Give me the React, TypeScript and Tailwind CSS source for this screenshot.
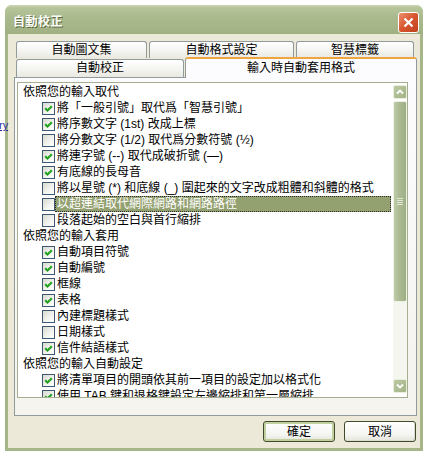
import React from "react";

type Item =
  | { kind: "h"; text: string }
  | { kind: "c"; text: string; checked: boolean; selected?: boolean };

const items: Item[] = [
  { kind: "h", text: "依照您的輸入取代" },
  { kind: "c", text: "將「一般引號」取代爲「智慧引號」", checked: true },
  { kind: "c", text: "將序數文字 (1st) 改成上標", checked: true },
  { kind: "c", text: "將分數文字 (1/2) 取代爲分數符號 (½)", checked: false },
  { kind: "c", text: "將連字號 (--) 取代成破折號 (—)", checked: true },
  { kind: "c", text: "有底線的長母音", checked: true },
  { kind: "c", text: "將以星號 (*) 和底線 (_) 圍起來的文字改成粗體和斜體的格式", checked: false },
  { kind: "c", text: "以超連結取代網際網路和網路路徑", checked: false, selected: true },
  { kind: "c", text: "段落起始的空白與首行縮排", checked: false },
  { kind: "h", text: "依照您的輸入套用" },
  { kind: "c", text: "自動項目符號", checked: true },
  { kind: "c", text: "自動編號", checked: true },
  { kind: "c", text: "框線", checked: true },
  { kind: "c", text: "表格", checked: true },
  { kind: "c", text: "內建標題樣式", checked: false },
  { kind: "c", text: "日期樣式", checked: false },
  { kind: "c", text: "信件結語樣式", checked: true },
  { kind: "h", text: "依照您的輸入自動設定" },
  { kind: "c", text: "將清單項目的開頭依其前一項目的設定加以格式化", checked: true },
  { kind: "c", text: "使用 TAB 鍵和退格鍵設定左邊縮排和第一層縮排", checked: true },
];

function Check({ checked }: { checked: boolean }) {
  return (
    <span className="w-[13px] h-[13px] shrink-0 border border-[#3E5872] bg-[linear-gradient(135deg,#D8D8D2,#F4F4F0_60%,#FFFFFF)] flex items-center justify-center">
      {checked && (
        <svg width="11" height="11" viewBox="0 0 11 11">
          <path d="M2.2 5.2 L4.5 7.5 L8.8 3.2" fill="none" stroke="#21A121" strokeWidth="2.1" />
        </svg>
      )}
    </span>
  );
}

function ScrollBtn({ dir }: { dir: "up" | "down" }) {
  return (
    <div className="h-[14px] w-[14px] rounded-[2px] border border-[#E9EEDC] bg-[linear-gradient(135deg,#BCC9A2,#A3B386)] flex items-center justify-center">
      <svg width="10" height="10" viewBox="0 0 10 10">
        <path
          d={dir === "up" ? "M2 6.5 L5 3.5 L8 6.5" : "M2 3.5 L5 6.5 L8 3.5"}
          fill="none"
          stroke="#FFFFFF"
          strokeWidth="1.8"
        />
      </svg>
    </div>
  );
}

function Btn({ label, def }: { label: string; def?: boolean }) {
  return (
    <div
      className={
        "w-[72px] h-[21px] rounded-[3px] border border-[#3F4B2C] flex items-center justify-center text-[12px] text-black bg-[linear-gradient(180deg,#FFFFFF,#F4F4F0_70%,#E4E3DA)] " +
        (def ? "shadow-[inset_0_0_0_2px_#C2CF9E]" : "shadow-[inset_-1px_-1px_0_#DCDBD2]")
      }
    >
      {label}
    </div>
  );
}

export default function App() {
  return (
    <div className="relative w-[429px] h-[458px] bg-white overflow-hidden pt-[5px] pl-[5px] font-['Liberation_Sans','Noto_Sans_CJK_TC',sans-serif] text-[12px] leading-[16px] text-black">
      <span className="absolute left-[-1px] top-[119px] z-20 text-[11px] leading-[13px] text-[#2B2BA6] underline">ry</span>
      <div className="w-[418px] h-[446px] flex flex-col rounded-t-[7px] bg-[#A7B688]">
        {/* title bar */}
        <div className="h-[29px] shrink-0 rounded-t-[7px] bg-[linear-gradient(180deg,#CCD7B2_0px,#B6C49A_3px,#ABBA8E_12px,#A5B487_24px,#A0B081_29px)] flex items-center pt-[5px] pl-[8px] pr-[4px]">
          <span className="flex-1 text-white font-bold text-[12px] tracking-[0.5px] [text-shadow:1px_1px_0_#5B6B3C]">
            自動校正
          </span>
          <div className="w-[21px] h-[21px] rounded-[3px] border border-white bg-[linear-gradient(135deg,#EC9070,#D6552E_50%,#C0431F)] flex items-center justify-center">
            <svg width="13" height="13" viewBox="0 0 13 13">
              <path d="M2.5 2.5 L10.5 10.5 M10.5 2.5 L2.5 10.5" stroke="#FFFFFF" strokeWidth="2.2" />
            </svg>
          </div>
        </div>
        {/* body */}
        <div className="h-[414px] mx-[3px] bg-[#ECE9D8] flex flex-col">
          {/* tab row 1 */}
          <div className="mt-[7px] ml-[8px] flex gap-[2px] h-[17px]">
            <div className="w-[131px] h-[17px] border-x border-t border-[#919B9C] rounded-t-[3px] bg-[linear-gradient(180deg,#FFFFFF,#F3F3EF_60%,#E9E8E1)] text-center leading-[16px]">
              自動圖文集
            </div>
            <div className="w-[145px] h-[17px] border-x border-t border-[#919B9C] rounded-t-[3px] bg-[linear-gradient(180deg,#FFFFFF,#F3F3EF_60%,#E9E8E1)] text-center leading-[16px]">
              自動格式設定
            </div>
            <div className="w-[118px] h-[17px] border-x border-t border-[#919B9C] rounded-t-[3px] bg-[linear-gradient(180deg,#FFFFFF,#F3F3EF_60%,#E9E8E1)] text-center leading-[16px]">
              智慧標籤
            </div>
          </div>
          {/* tab row 2 */}
          <div className="ml-[8px] flex items-end gap-[1px] h-[19px]">
            <div className="w-[168px] h-[18px] border-x border-t border-[#919B9C] rounded-t-[3px] bg-[linear-gradient(180deg,#FFFFFF,#F3F3EF_60%,#E9E8E1)] text-center leading-[17px]">
              自動校正
            </div>
            <div className="relative z-10 -mb-[1px] w-[232px] h-[21px] border-x border-[#919B9C] border-t-2 border-t-[#EFA642] rounded-t-[3px] bg-[#FCFCFE] text-center leading-[18px]">
              輸入時自動套用格式
            </div>
          </div>
          {/* panel */}
          <div className="ml-[6px] w-[403px] h-[339px] border border-[#919B9C] bg-[linear-gradient(180deg,#FCFCFE,#F4F3EE)]">
            <div className="ml-[2px] mt-[4px] w-[391px] h-[316px] border border-[#A5AE8F] bg-white flex overflow-hidden">
              <div className="w-[375px] pt-[1px] overflow-hidden">
                {items.map((it, i) =>
                  it.kind === "h" ? (
                    <div key={i} className="h-[16px] pl-[5px] flex items-center whitespace-nowrap">
                      {it.text}
                    </div>
                  ) : (
                    <div key={i} className="h-[16px] pl-[24px] flex items-center whitespace-nowrap">
                      <Check checked={it.checked} />
                      {it.selected ? (
                        <span className="flex-1 mr-[2px] h-[16px] pl-[1px] leading-[14px] border border-dotted border-[#2A2A2A] bg-[#93A070] text-white">
                          {it.text}
                        </span>
                      ) : (
                        <span className="pl-[2px]">{it.text}</span>
                      )}
                    </div>
                  )
                )}
              </div>
              <div className="w-[14px] flex flex-col pt-[2px] pb-[4px]">
                <ScrollBtn dir="up" />
                <div className="h-[2px]" />
                <div className="h-[201px] rounded-[2px] border border-[#EEF2E4] bg-[linear-gradient(90deg,#BFCBA9,#AAB991_50%,#9EAE85)] flex flex-col items-center justify-center gap-[1px]">
                  <div className="w-[6px] h-[1px] bg-[#E2E8D4]" />
                  <div className="w-[6px] h-[1px] bg-[#E2E8D4]" />
                  <div className="w-[6px] h-[1px] bg-[#E2E8D4]" />
                  <div className="w-[6px] h-[1px] bg-[#E2E8D4]" />
                </div>
                <div className="flex-1 bg-[#F6F6F0]" />
                <ScrollBtn dir="down" />
              </div>
            </div>
          </div>
          {/* buttons */}
          <div className="mt-[5px] flex justify-end gap-[9px] pr-[4px]">
            <Btn label="確定" def />
            <Btn label="取消" />
          </div>
        </div>
      </div>
    </div>
  );
}
